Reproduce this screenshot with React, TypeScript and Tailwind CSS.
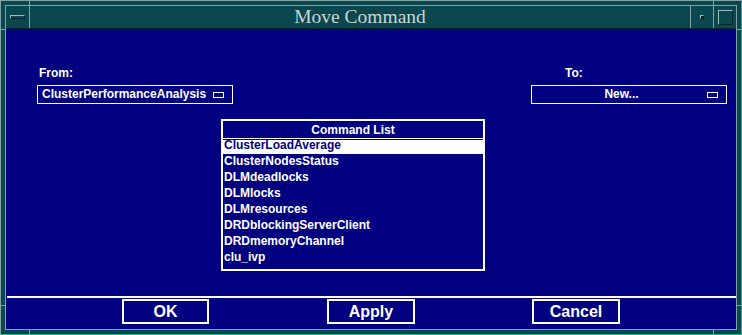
import React from 'react';

const commands = [
  'ClusterLoadAverage',
  'ClusterNodesStatus',
  'DLMdeadlocks',
  'DLMlocks',
  'DLMresources',
  'DRDblockingServerClient',
  'DRDmemoryChannel',
  'clu_ivp',
];

const sans = "font-['Liberation_Sans',Arial,sans-serif] font-bold";

const OptionBox: React.FC<{ value: string; centered?: boolean }> = ({ value, centered }) => (
  <div className="flex h-[19px] w-[196px] items-center border border-white pl-[4px] pr-[8px]">
    <span className={`flex-1 text-[12px] leading-[17px] text-white ${centered ? 'text-center' : ''}`}>{value}</span>
    <span className="h-[6px] w-[11px] border border-white" />
  </div>
);

const Button: React.FC<{ label: string; className?: string }> = ({ label, className }) => (
  <button className={`flex h-[25px] items-center justify-center border-2 border-white text-[16px] leading-[18px] text-white ${className ?? ''}`}>
    {label}
  </button>
);

export default function App() {
  return (
    <div className="relative h-[335px] w-[742px] border border-t-[#7fa3a5] border-l-[#7fa3a5] border-r-[#19b77c] border-b-[#19b77c] bg-[#0b474f] p-[4px]">
      {/* resize handle marks */}
      <div className="absolute left-[28px] top-0 h-[5px] w-px bg-[#7fa3a5]" />
      <div className="absolute left-[712px] top-0 h-[5px] w-px bg-[#7fa3a5]" />
      <div className="absolute bottom-0 left-[28px] h-[5px] w-px bg-[#7fa3a5]" />
      <div className="absolute bottom-0 left-[712px] h-[5px] w-px bg-[#7fa3a5]" />
      <div className="absolute left-0 top-[28px] h-px w-[5px] bg-[#7fa3a5]" />
      <div className="absolute right-0 top-[28px] h-px w-[5px] bg-[#7fa3a5]" />
      <div className="absolute left-0 top-[304px] h-px w-[5px] bg-[#7fa3a5]" />
      <div className="absolute right-0 top-[304px] h-px w-[5px] bg-[#7fa3a5]" />

      <div className="flex h-full flex-col border border-[#7fa3a5]">
        {/* title bar */}
        <div className="flex h-[23px] border-b border-b-[#03262b]">
          <div className="flex w-[24px] items-center justify-center border-r border-[#7fa3a5]">
            <div className="h-[4px] w-[15px] border border-t-[#9fbcbd] border-l-[#9fbcbd] border-r-[#03262b] border-b-[#03262b]" />
          </div>
          <div className="flex flex-1 items-center justify-center font-['Liberation_Serif','Times_New_Roman',serif] text-[19.5px] leading-[22px] text-[#c9d6d6]">
            Move Command
          </div>
          <div className="flex w-[23px] items-center justify-center border-l border-[#7fa3a5]">
            <div className="h-[4px] w-[4px] border border-t-[#9fbcbd] border-l-[#9fbcbd] border-r-[#03262b] border-b-[#03262b] bg-[#03262b]" />
          </div>
          <div className="flex w-[23px] items-center justify-center border-l border-[#7fa3a5]">
            <div className="h-[15px] w-[15px] border border-t-[#9fbcbd] border-l-[#9fbcbd] border-r-[#03262b] border-b-[#03262b]" />
          </div>
        </div>

        {/* dialog body */}
        <div className={`flex flex-1 flex-col bg-[#000080] ${sans}`}>
          <div className="flex justify-between pl-[31px] pr-[9px] pt-[37px]">
            <div>
              <div className="mb-[5px] pl-[2px] text-[12px] leading-[14px] text-white">From:</div>
              <OptionBox value="ClusterPerformanceAnalysis" />
            </div>
            <div>
              <div className="mb-[5px] pl-[34px] text-[12px] leading-[14px] text-white">To:</div>
              <OptionBox value="New..." centered />
            </div>
          </div>

          <div className="ml-[215px] mt-[15px] w-[264px] border-2 border-white pb-[2px]">
            <div className="h-[18px] border-b border-white pt-[2px] text-center text-[12px] leading-[14px] text-white">
              Command List
            </div>
            {commands.map((c, i) =>
              i === 0 ? (
                <div key={c} className="h-[16px] pt-[1px]">
                  <div className="h-[14px] bg-white pl-[1px] text-[12px] leading-[11px] text-[#000080]">{c}</div>
                </div>
              ) : (
                <div key={c} className="h-[16px] pl-[1px] text-[12px] leading-[13px] text-white">
                  {c}
                </div>
              )
            )}
          </div>

          <div className="ml-px mt-[25px] h-[2px] bg-white" />

          <div className="mt-px flex pl-[116px]">
            <Button label="OK" className="w-[87px]" />
            <Button label="Apply" className="ml-[118px] w-[88px]" />
            <Button label="Cancel" className="ml-[117px] w-[88px]" />
          </div>
        </div>
      </div>
    </div>
  );
}
